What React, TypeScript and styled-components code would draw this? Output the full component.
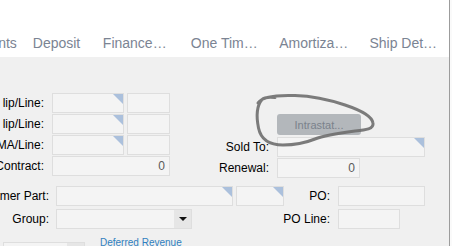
import React from "react";
import styled, { createGlobalStyle } from "styled-components";

const Global = createGlobalStyle`
  html, body { margin: 0; padding: 0; background: #ffffff; }
  body { font-family: "Liberation Sans", Arial, sans-serif; overflow: hidden; }
  * { box-sizing: border-box; }
`;

const Frame = styled.div`
  position: relative;
  display: flex;
  width: 452px;
  height: 246px;
  overflow: hidden;
  background: #ffffff;
`;

const Main = styled.div`
  width: 449px;
  display: flex;
  flex-direction: column;
`;

const Edge = styled.div`
  width: 1px;
  background: #9c9c9c;
`;

const Gutter = styled.div`
  width: 2px;
  background: #fafafa;
`;

const TabBar = styled.div`
  height: 57px;
  flex: none;
  display: flex;
  padding-top: 35px;
  margin-left: -8px;
  background: #ffffff;
`;

const Tab = styled.div<{ $w: number }>`
  width: ${(p) => p.$w}px;
  flex: none;
  text-align: center;
  white-space: nowrap;
  font-size: 14px;
  line-height: 16px;
  color: #7b8493;
`;

const Panel = styled.div`
  flex: 1;
  background: #f0f0f0;
  display: flex;
  flex-direction: column;
`;

const TopSection = styled.div`
  display: flex;
  align-items: flex-start;
`;

const LeftGrid = styled.div`
  margin-top: 36px;
  display: grid;
  grid-template-columns: 52px 72px 46px;
  grid-auto-rows: 20px;
  row-gap: 1px;
`;

const RightGrid = styled.div`
  margin-top: 57px;
  margin-left: 39px;
  display: grid;
  grid-template-columns: 68px auto;
  row-gap: 1px;
  align-items: center;
`;

const Label = styled.div<{ $pr?: number }>`
  display: flex;
  justify-content: flex-end;
  align-items: center;
  height: 20px;
  padding-right: ${(p) => p.$pr ?? 8}px;
  white-space: nowrap;
  font-size: 12px;
  color: #000000;
  min-width: 0;
`;

const Field = styled.div<{ $w?: number; $ml?: number; $span?: boolean }>`
  position: relative;
  height: 20px;
  width: ${(p) => (p.$w ? `${p.$w}px` : "auto")};
  margin-left: ${(p) => p.$ml ?? 0}px;
  grid-column: ${(p) => (p.$span ? "span 2" : "auto")};
  justify-self: start;
  background: #f4f4f4;
  border: 1px solid #dedede;
  display: flex;
  align-items: center;
  justify-content: flex-end;
  padding-right: 4px;
  font-size: 12px;
  color: #5a5a5a;
`;

const Corner = styled.span`
  position: absolute;
  top: 0;
  right: 0;
  width: 10px;
  height: 10px;
  background: #abc0dc;
  clip-path: polygon(0 0, 100% 0, 100% 100%);
`;

const Button = styled.div`
  width: 84px;
  height: 21px;
  margin-bottom: 1px;
  border-radius: 3px;
  background: #b3b7bb;
  color: #7a828b;
  font-size: 11px;
  display: flex;
  align-items: center;
  justify-content: center;
`;

const Spacer = styled.div``;

const LowerGrid = styled.div`
  margin-top: 8px;
  display: grid;
  grid-template-columns: 56px 177px 51px 54px auto;
  grid-auto-rows: 20px;
  row-gap: 3px;
  align-items: center;
`;

const Dropdown = styled.div<{ $w: number }>`
  width: ${(p) => p.$w}px;
  height: 20px;
  justify-self: start;
  display: flex;
  background: #f4f4f4;
  border: 1px solid #dedede;
`;

const DropText = styled.div`
  flex: 1;
`;

const DropButton = styled.div`
  width: 17px;
  background: #e6e6e6;
  display: flex;
  align-items: center;
  justify-content: center;
  &::after {
    content: "";
    width: 0;
    height: 0;
    border-left: 4px solid transparent;
    border-right: 4px solid transparent;
    border-top: 4px solid #111;
  }
`;

const BottomRow = styled.div`
  margin-top: 13px;
  padding-left: 3px;
  display: flex;
  align-items: flex-start;
`;

const Link = styled.span`
  margin-left: 15px;
  margin-top: -5px;
  font-size: 10px;
  line-height: 12px;
  color: #2f7fbf;
  white-space: nowrap;
`;

const Scribble = styled.svg`
  position: absolute;
  left: 0;
  top: 0;
  pointer-events: none;
`;

export default function App() {
  return (
    <>
      <Global />
      <Frame>
        <Main>
          <TabBar>
            <Tab $w={31}>nts</Tab>
            <Tab $w={67}>Deposit</Tab>
            <Tab $w={89.5}>Finance…</Tab>
            <Tab $w={89.5}>One Tim…</Tab>
            <Tab $w={89.5}>Amortiza…</Tab>
            <Tab $w={89.5}>Ship Det…</Tab>
          </TabBar>
          <Panel>
            <TopSection>
              <LeftGrid>
                <Label>lip/Line:</Label>
                <Field $w={72}><Corner /></Field>
                <Field $w={43} $ml={3} />
                <Label>lip/Line:</Label>
                <Field $w={72}><Corner /></Field>
                <Field $w={43} $ml={3} />
                <Label>MA/Line:</Label>
                <Field $w={72}><Corner /></Field>
                <Field $w={43} $ml={3} />
                <Label>Contract:</Label>
                <Field $span $w={118}>0</Field>
              </LeftGrid>
              <RightGrid>
                <Spacer />
                <Button>Intrastat...</Button>
                <Label>Sold To:</Label>
                <Field $w={148}><Corner /></Field>
                <Label>Renewal:</Label>
                <Field $w={83}>0</Field>
              </RightGrid>
            </TopSection>
            <LowerGrid>
              <Label $pr={7}>mer Part:</Label>
              <Field $w={177}><Corner /></Field>
              <Field $w={48} $ml={3}><Corner /></Field>
              <Label>PO:</Label>
              <Field $w={87} />
              <Label $pr={7}>Group:</Label>
              <Dropdown $w={136}>
                <DropText />
                <DropButton />
              </Dropdown>
              <Spacer />
              <Label>PO Line:</Label>
              <Field $w={62} />
            </LowerGrid>
            <BottomRow>
              <Dropdown $w={82}>
                <DropText />
                <DropButton />
              </Dropdown>
              <Link>Deferred Revenue</Link>
            </BottomRow>
          </Panel>
        </Main>
        <Edge />
        <Gutter />
        <Scribble width="452" height="246" viewBox="0 0 452 246">
          <path
            d="M 258 103 C 262 96, 280 95, 295 95.5 C 312 96, 330 100, 345 105 C 360 110, 372 116, 373 123 C 374 129, 366 130, 355 131 C 340 133, 325 135, 315 139 C 305 143, 295 145, 283 145 C 270 145, 261 140, 258.5 128 C 256.5 118, 256.5 106, 262 99.5 C 264 97.5, 270 97, 275 97.5"
            fill="none"
            stroke="#6e6e6e"
            strokeWidth={3}
            strokeLinecap="round"
            strokeLinejoin="round"
            opacity={0.9}
          />
        </Scribble>
      </Frame>
    </>
  );
}
